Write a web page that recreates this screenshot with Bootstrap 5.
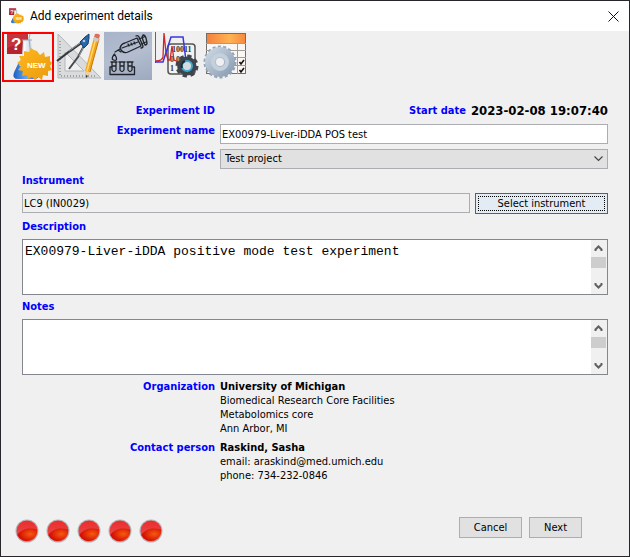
<!DOCTYPE html>
<html lang="en">
<head>
<meta charset="utf-8">
<meta name="viewport" content="width=device-width, initial-scale=1">
<title>Add experiment details</title>
<link href="https://cdn.jsdelivr.net/npm/bootstrap@5.3.0/dist/css/bootstrap.min.css" rel="stylesheet">
<style>
body{font:11px/14px "DejaVu Sans Condensed","DejaVu Sans",sans-serif;color:#000;background:#f0f0f0}
.dialog{border:1px solid #29262b;background:#f0f0f0}
.titlebar{height:30px;gap:6px;padding:0 10px 0 7px;font:12px/16px Roboto,"Noto Sans",sans-serif}
.titlebar h1{font:inherit}
.close-x{width:11px;height:11px}
.tools{gap:1px;padding:1px 1px 0}
.tool{width:48px;height:48px}
.tool-first{width:52px;height:50px;border:2px solid #f00}
.tool-first svg{width:48px;height:46px}
.tool-on{background:linear-gradient(160deg,#a9b4ca,#b3bdcf 50%,#9ca9bf)}
.fields{padding:21px 21px 0;gap:5px}
.cap{color:#00f;font-weight:700}
.over{line-height:15px}
.side{width:193px;text-align:right;flex:none}
.field-row{gap:5px}
.r-date{height:16px}
.stamp{font-size:13px;font-weight:700;line-height:16px}
.box{height:20px;border:1px solid #abadb3;border-radius:0;background:#fff;padding:0 1px;font:inherit;color:#000;min-width:0}
.box[readonly]{background:#f0f0f0}
.pick{background:#e1e1e1 url("data:image/svg+xml,%3Csvg xmlns='http://www.w3.org/2000/svg' viewBox='0 0 9 6'%3E%3Cpath d='M.5.5l4 4 4-4' fill='none' stroke='%23444' stroke-width='1.2'/%3E%3C/svg%3E") no-repeat right 4px center/9px 6px;appearance:none;padding:0 16px 0 4px}
.btn-w{background:#e1e1e1;border:1px solid #adadad;border-radius:0;font:inherit;color:#000;height:21px;padding:0;flex:none}
.btn-focus{width:133px;background:#e3ecf5;border-color:#0078d7;outline:1px dotted #000;outline-offset:-4px}
.memo{height:56px;border:1px solid #828790;background:#fff}
.memo textarea{border:0;resize:none;outline:0;padding:4px 2px 0;font:13px/16px "Liberation Mono",monospace;color:#000;background:none;overflow:hidden;min-width:0}
.scroll{width:16px;background:#f0f0f0}
.scroll svg{width:15px;height:17px}
.thumb{height:11px;width:15px;background:#cdcdcd}
.lamps{gap:7px}
.lamps svg{width:24px;height:24px}
.foot{padding:0 47px 13px 14px}
.acts{gap:7px;margin-bottom:5px}
.w-cancel{width:63px}.w-next{width:53px}
.bin{font:bold 8px "Liberation Serif",serif;fill:#333}
.new{font:bold 8px "Liberation Sans",sans-serif;fill:#fff}
.ask{font:bold 17px "Liberation Sans",sans-serif;fill:#fff}
</style>
</head>
<body>
<svg class="position-absolute" width="0" height="0" aria-hidden="true">
  <defs>
    <linearGradient id="gold" x1="0" y1="0" x2="1" y2="1"><stop offset="0" stop-color="#ffb81c"/><stop offset="1" stop-color="#e99a10"/></linearGradient>
    <linearGradient id="glass" x1="0" x2="1"><stop offset="0" stop-color="#8fa3b8"/><stop offset=".45" stop-color="#eef3f7"/><stop offset="1" stop-color="#a9bacb"/></linearGradient>
    <linearGradient id="liq" x1="0" x2="1"><stop offset="0" stop-color="#1c5fc4"/><stop offset=".5" stop-color="#64a8f0"/><stop offset="1" stop-color="#1b66d2"/></linearGradient>
    <linearGradient id="head"><stop offset="0" stop-color="#f5813d"/><stop offset=".6" stop-color="#ffb253"/><stop offset="1" stop-color="#f68a3d"/></linearGradient>
    <linearGradient id="steel" x1="0" y1="0" x2="1" y2="1"><stop offset="0" stop-color="#d3dde8"/><stop offset="1" stop-color="#8296ac"/></linearGradient>
    <linearGradient id="lampTop" x1="0" y1="0" x2="0" y2="1"><stop offset="0" stop-color="#f02a2a"/><stop offset="1" stop-color="#d9585a"/></linearGradient>
    <radialGradient id="lampLow" cx=".65" cy=".45" r=".65"><stop offset="0" stop-color="#f65a10"/><stop offset="1" stop-color="#d00500"/></radialGradient>
  </defs>
  <symbol id="flask" viewBox="0 0 48 46">
    <path d="M3 0h21v20H3z" fill="#b5232f"/><path d="M3 0h21v6L3 14z" fill="#c5343d"/>
    <path d="M19 6h8l1 14 7 19q1 5-5 5H14q-6 0-4-6l8-16z" fill="url(#glass)"/>
    <path d="M26 0l-1 4 2 19M18 6h10" stroke="#9aa9b8" fill="none"/>
    <path d="M15 28q8 4 14 0l6 13q0 4-5 4H14q-6 0-4-6z" fill="url(#liq)"/>
    <path d="M21 8l-1 15-4 9" fill="none" stroke="#fff" stroke-width="1.500" opacity=".8"/>
    <path d="M33 17l3 4 4-3 1 5 5-1v5l2 2-2 3 2 4-4 1v5l-5-1-1 5-4-3-3 3-3-3-4 2-1-4-5 1 1-5-5-1 3-4-4-3 4-3-2-4h5v-5l5 1 2-4 3 2z" fill="url(#gold)"/>
  </symbol>
  <symbol id="lamp" viewBox="0 0 24 24">
    <circle cx="12" cy="12" r="11.500" fill="#b4b6ba"/><circle cx="12" cy="12" r="10.500" fill="url(#lampTop)"/>
    <path d="M2.300 16Q6 10.500 13 9.500 18 9 22.200 10.500A10.500 10.500 0 0 1 2.300 16z" fill="url(#lampLow)"/>
  </symbol>
  <symbol id="up" viewBox="0 0 15 17"><path d="M4.500 11V9.500l3-3 3 3V11" fill="none" stroke="#606060" stroke-width="2"/></symbol>
  <symbol id="down" viewBox="0 0 15 17"><path d="M4.500 6v1.500l3 3 3-3V6" fill="none" stroke="#606060" stroke-width="2"/></symbol>
</svg>

<div class="dialog min-vh-100 d-flex flex-column">
  <header class="titlebar bg-white d-flex align-items-center">
    <svg width="16" height="16" viewBox="0 0 48 46" aria-hidden="true"><use href="#flask" width="48" height="46"/><text class="ask" x="7" y="16">?</text><text class="new" x="23" y="34">NEW</text></svg>
    <h1 class="m-0 flex-grow-1">Add experiment details</h1>
    <button class="btn p-0 border-0 d-flex" type="button" aria-label="Close"><svg class="close-x" viewBox="0 0 11 11"><path d="M.5.5l10 10M10.500.5l-10 10" stroke="#111" fill="none"/></svg></button>
  </header>

  <nav class="tools d-flex align-items-start" aria-label="Steps">
    <button class="btn rounded-0 p-0 tool-first d-flex" type="button" aria-label="New experiment"><svg viewBox="0 0 48 46"><use href="#flask" width="48" height="46"/><text class="ask" x="7" y="16">?</text><text class="new" x="23" y="34">NEW</text></svg></button>
    <button class="btn rounded-0 p-0 border-0 tool" type="button" aria-label="Design">
      <svg class="d-block" viewBox="0 0 48 48">
        <path fill-rule="evenodd" d="M3 2l43 44H3zM10 20v19h19z" fill="#d9dbdd" stroke="#b3b6b9"/>
        <path d="M5 9v35h36" fill="none" stroke="#a0a3a6" stroke-width="2" stroke-dasharray="1 2"/>
        <path d="M29 9L15 19 2 29" fill="none" stroke="#34383d" stroke-width="2.200"/><path d="M31 10l-8 15-9 12" fill="none" stroke="#454a50" stroke-width="2"/>
        <path d="M28 9L14 19M30 12l-6 12" stroke="#b8bdc2" stroke-width=".7"/>
        <path d="M25 10l5-5 4-3v4l-1 6-4 4z" fill="#2a67a8" stroke="#173f70"/><circle cx="29" cy="9" r="1.300" fill="#aecbe8"/>
        <path d="M39 5l5 2-9 33-4 6-1-7z" fill="#f5a51d"/><path d="M41 6l-9 33" stroke="#ffd76a" stroke-width="1.500"/><path d="M44 7l-9 33" stroke="#c77608"/>
        <path d="M39 5l1-3q3-1 5 1l-1 4z" fill="#dc6e5c"/><path d="M38 8l5 2 1-3-5-2z" fill="#c8cbd0"/><path d="M30 39l5 1-4 6z" fill="#edcfa0"/><path d="M31 43l2 1-2 2z" fill="#333"/>
      </svg>
    </button>
    <button class="btn rounded-0 p-0 border-0 tool tool-on" type="button" aria-label="Samples">
      <svg class="d-block" viewBox="0 0 48 48" fill="none" stroke="#20242a" stroke-width="1.300" stroke-linejoin="round" stroke-linecap="round">
        <path d="M11 20l5-3M16 16q1-4 5-5l12-5 4 8-13 6q-4 2-7-2zM14 18l3 2"/><path d="M24 12l1 2M27 11l1 2M30 10l1 2M18 16l16-6"/>
        <path d="M32 4q2-1 3 1l4 9q0 2-2 2M35 7l5-2M37 12l5-2M39 3q2 0 3 3l1 5q0 2-2 2-2-4-3-8z"/>
        <path d="M10.500 22q-4 5-1 6t3-1q0-2-2-5z"/>
        <path d="M6 35h2M29 35h1.500v7.500H6V35M7 30h6M15 30h6M23 30h6M8 31v7q2 3 4 0v-7M16 31v7q2 3 4 0v-7M24 31v7q2 3 4 0v-7M8 34h4M16 34h4M24 34h4"/>
      </svg>
    </button>
    <button class="btn rounded-0 p-0 border-0 tool" type="button" aria-label="Data processing">
      <svg class="d-block" viewBox="0 0 48 48">
        <path d="M2.500 0v31" stroke="#666"/><rect x="15" y="12" width="27" height="30" rx="3" fill="#f2f2f2" stroke="#555" stroke-width="1.500"/>
        <text class="bin" x="19" y="20">10011</text><text class="bin" x="17" y="30">0 01</text><text class="bin" x="17" y="39">1 1</text>
        <path d="M3 29q6 0 7-4l1-24 2 20 2 7h2l2-14 2 14 5 2" fill="none" stroke="#d02525" stroke-width="1.300"/>
        <path d="M2 30h8l8-25h12l3 24" fill="none" stroke="#3a35df" stroke-width="1.500"/>
        <circle cx="34" cy="34" r="9.500" fill="#3e454c"/><circle cx="34" cy="34" r="9.500" fill="none" stroke="#3e454c" stroke-width="4" stroke-dasharray="4 3.460"/>
        <circle cx="34" cy="34" r="5" fill="#d5dce1" stroke="#3ea9d0" stroke-width="2"/><path d="M29 36a5.500 5.500 0 0 1 3-7" stroke="#202a33" stroke-width="2" fill="none"/>
      </svg>
    </button>
    <button class="btn rounded-0 p-0 border-0 tool" type="button" aria-label="Settings">
      <svg class="d-block" viewBox="0 0 48 48">
        <rect x="4.500" y="1.500" width="39" height="40" fill="#faf6f3" stroke="#746e69"/><path d="M5 2h38v9H5z" fill="url(#head)"/>
        <path d="M4 11.500h40M4 18.500h40M4 25.500h40M4 33.500h40M35.500 11v31" stroke="#a29c97" fill="none"/>
        <path d="M37.500 30l1.500 2 3-4M37.500 38l1.500 2 3-4" stroke="#111" stroke-width="1.600" fill="none"/>
        <circle cx="18" cy="30" r="15" fill="none" stroke="#91a3b7" stroke-width="3" stroke-dasharray="3 2.236"/>
        <circle cx="18" cy="30" r="15" fill="url(#steel)"/>
        <circle cx="18" cy="30" r="7" fill="none" stroke="#c4d0dc" stroke-width="4"/><circle cx="18" cy="30" r="4" fill="#f0f0f0"/>
      </svg>
    </button>
  </nav>

  <form class="fields d-flex flex-column">
    <div class="r-date d-flex field-row align-items-center">
      <div class="side cap">Experiment ID</div>
      <div class="ms-auto cap">Start date</div>
      <div class="stamp">2023-02-08 19:07:40</div>
    </div>
    <div class="d-flex field-row">
      <label class="side cap" for="name">Experiment name</label>
      <input class="box flex-grow-1" id="name" value="EX00979-Liver-iDDA POS test">
    </div>
    <div class="d-flex field-row">
      <label class="side cap" for="project">Project</label>
      <select class="box pick flex-grow-1" id="project"><option>Test project</option></select>
    </div>
    <label class="cap" for="inst">Instrument</label>
    <div class="d-flex field-row">
      <input class="box flex-grow-1" id="inst" value="LC9 (IN0029)" readonly>
      <button class="btn-w btn-focus" type="button">Select instrument</button>
    </div>
    <label class="cap over" for="desc">Description</label>
    <div class="memo d-flex">
      <textarea class="flex-grow-1" id="desc">EX00979-Liver-iDDA positive mode test experiment</textarea>
      <div class="scroll d-flex flex-column" aria-hidden="true"><svg><use href="#up"/></svg><div class="thumb"></div><svg class="mt-auto"><use href="#down"/></svg></div>
    </div>
    <label class="cap" for="notes">Notes</label>
    <div class="memo d-flex">
      <textarea class="flex-grow-1" id="notes"></textarea>
      <div class="scroll d-flex flex-column" aria-hidden="true"><svg><use href="#up"/></svg><div class="thumb"></div><svg class="mt-auto"><use href="#down"/></svg></div>
    </div>
    <div class="d-flex field-row">
      <div class="side cap">Organization</div>
      <div><strong>University of Michigan</strong><br>Biomedical Research Core Facilities<br>Metabolomics core<br>Ann Arbor, MI</div>
    </div>
    <div class="d-flex field-row">
      <div class="side cap">Contact person</div>
      <div><strong>Raskind, Sasha</strong><br>email: araskind@med.umich.edu<br>phone: 734-232-0846</div>
    </div>
  </form>

  <footer class="foot mt-auto d-flex align-items-end justify-content-between">
    <div class="lamps d-flex" aria-hidden="true"><svg><use href="#lamp"/></svg><svg><use href="#lamp"/></svg><svg><use href="#lamp"/></svg><svg><use href="#lamp"/></svg><svg><use href="#lamp"/></svg></div>
    <div class="acts d-flex"><button class="btn-w w-cancel" type="button">Cancel</button><button class="btn-w w-next" type="button">Next</button></div>
  </footer>
</div>
<script src="https://cdn.jsdelivr.net/npm/bootstrap@5.3.0/dist/js/bootstrap.bundle.min.js"></script>
</body>
</html>
